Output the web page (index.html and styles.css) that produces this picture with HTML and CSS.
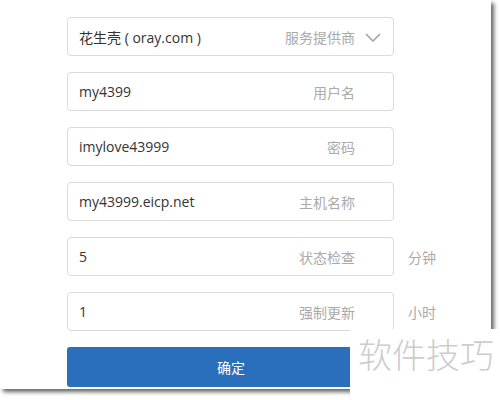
FILE: index.html
```html
<!DOCTYPE html>
<html lang="zh">
<head>
<meta charset="utf-8">
<link rel="stylesheet" href="styles.css">
</head>
<body>
<div class="panel">
  <form class="form">
    <div class="row">
      <div class="field">
        <span class="value">花生壳 ( oray.com )</span>
        <span class="label label-select">服务提供商</span>
        <svg class="chev" width="16" height="9" viewBox="0 0 16 9"><path d="M1 1 L8 8 L15 1" fill="none" stroke="#a0a0a0" stroke-width="1.5"/></svg>
      </div>
    </div>
    <div class="row">
      <div class="field"><span class="value">my4399</span><span class="label">用户名</span></div>
    </div>
    <div class="row">
      <div class="field"><span class="value">imylove43999</span><span class="label">密码</span></div>
    </div>
    <div class="row">
      <div class="field"><span class="value">my43999.eicp.net</span><span class="label">主机名称</span></div>
    </div>
    <div class="row">
      <div class="field"><span class="value">5</span><span class="label">状态检查</span></div>
      <span class="unit">分钟</span>
    </div>
    <div class="row">
      <div class="field"><span class="value">1</span><span class="label">强制更新</span></div>
      <span class="unit">小时</span>
    </div>
    <div class="btn">确定</div>
  </form>
</div>
<div class="watermark">软件技巧</div>
</body>
</html>
```
FILE: styles.css
```css
* { box-sizing: border-box; }
html, body { margin: 0; padding: 0; background: #fff; }
body {
  width: 500px;
  height: 400px;
  position: relative;
  overflow: hidden;
  font-family: "Open Sans", "Noto Sans CJK SC", sans-serif;
  font-size: 14px;
}
.panel {
  width: 491px;
  height: 389px;
  background: #fff;
  box-shadow: 3px 3px 4px rgba(0,0,0,0.6);
  padding: 17px 0 0 67px;
}
.form {
  display: flex;
  flex-direction: column;
  gap: 16px;
}
.row {
  display: flex;
  align-items: center;
  gap: 14px;
}
.field {
  width: 327px;
  height: 39px;
  border: 1px solid #d9d9d9;
  border-radius: 4px;
  display: flex;
  align-items: center;
  padding: 0 38px 0 11px;
  position: relative;
}
.value {
  flex: 1;
  color: #333;
  font-family: "Open Sans", "Noto Sans CJK SC", sans-serif;
}
.label {
  color: #aaa;
  font-family: "Noto Sans CJK SC", sans-serif;
}
.chev {
  position: absolute;
  right: 12px;
  top: 15px;
}
.unit {
  color: #aaa;
  font-family: "Noto Sans CJK SC", sans-serif;
}
.btn {
  width: 328px;
  height: 40px;
  background: #2a6fbb;
  border-radius: 3px;
  color: #fff;
  display: flex;
  align-items: center;
  justify-content: center;
  font-family: "Noto Sans CJK SC", sans-serif;
  font-size: 14px;
}
.watermark {
  position: absolute;
  left: 350px;
  top: 329px;
  right: 0;
  bottom: 0;
  background: #fff;
  color: #cdcdcd;
  font-family: "Noto Sans CJK SC", sans-serif;
  font-weight: 300;
  font-size: 34px;
  line-height: 50px;
  padding-left: 8px;
}
```
